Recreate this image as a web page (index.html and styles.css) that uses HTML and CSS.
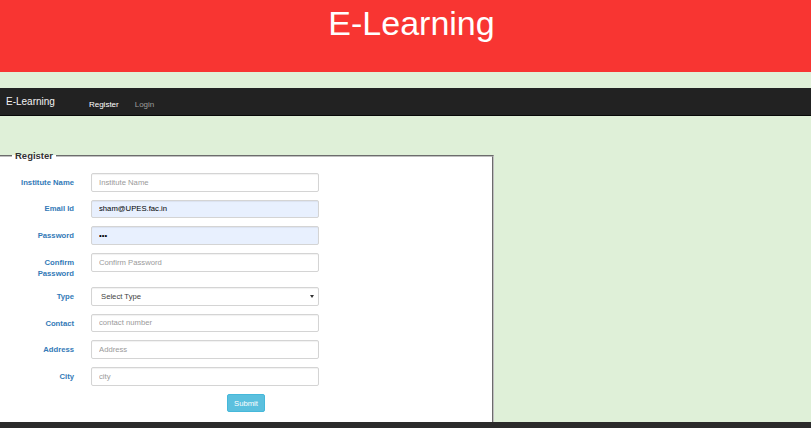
FILE: index.html
```html
<!DOCTYPE html>
<html lang="en">
<head>
<meta charset="utf-8">
<title>E-Learning</title>
<link rel="stylesheet" href="styles.css">
</head>
<body>
<header class="banner">
  <h1 class="banner-title">E-Learning</h1>
</header>
<nav class="navbar">
  <span class="brand">E-Learning</span>
  <ul class="nav-links">
    <li><a class="nav-link active" href="#">Register</a></li>
    <li><a class="nav-link" href="#">Login</a></li>
  </ul>
</nav>
<main class="main">
  <fieldset class="register">
    <legend class="register-legend">Register</legend>
    <form class="form">
      <div class="row">
        <label class="label" for="inst">Institute Name</label>
        <input class="field" id="inst" type="text" placeholder="Institute Name">
      </div>
      <div class="row">
        <label class="label" for="email">Email Id</label>
        <input class="field field-filled" id="email" type="text" value="sham@UPES.fac.in">
      </div>
      <div class="row">
        <label class="label" for="pwd">Password</label>
        <input class="field field-filled" id="pwd" type="password" value="abc">
      </div>
      <div class="row">
        <label class="label" for="cpwd">Confirm Password</label>
        <input class="field" id="cpwd" type="password" placeholder="Confirm Password">
      </div>
      <div class="row">
        <label class="label" for="type">Type</label>
        <div class="select-wrap">
          <select class="field select" id="type">
            <option>Select Type</option>
          </select>
        </div>
      </div>
      <div class="row">
        <label class="label" for="contact">Contact</label>
        <input class="field" id="contact" type="text" placeholder="contact number">
      </div>
      <div class="row">
        <label class="label" for="addr">Address</label>
        <input class="field" id="addr" type="text" placeholder="Address">
      </div>
      <div class="row">
        <label class="label" for="city">City</label>
        <input class="field" id="city" type="text" placeholder="city">
      </div>
      <div class="row row-last">
        <span></span>
        <div><button class="btn-submit" type="button">Submit</button></div>
      </div>
    </form>
  </fieldset>
</main>
<footer class="footer"></footer>
</body>
</html>
```
FILE: styles.css
```css
html, body {
  margin: 0;
  padding: 0;
}
body {
  background: #dff0d8;
  font-family: "Liberation Sans", Arial, sans-serif;
  color: #333;
  height: 428px;
  overflow: hidden;
}
.banner {
  background: #f83532;
  height: 72px;
  margin-bottom: 16px;
  text-align: center;
  padding-left: 12px;
}
.banner-title {
  margin: 0;
  padding-top: 3px;
  font-size: 34px;
  line-height: 40px;
  font-weight: normal;
  color: #fff;
}
.navbar {
  background: #222;
  height: 28px;
  display: flex;
  align-items: center;
  box-sizing: border-box;
  border-bottom: 1px solid #080808;
}
.brand {
  color: #f2f2f2;
  font-size: 10px;
  padding-left: 6px;
  line-height: 14px;
}
.nav-links {
  list-style: none;
  margin: 0 0 0 34px;
  padding: 0;
  display: flex;
  gap: 16px;
}
.nav-link {
  color: #9d9d9d;
  text-decoration: none;
  font-size: 8px;
  line-height: 12px;
}
.nav-link.active {
  color: #fff;
}
.main {
  padding-top: 33px;
}
.register {
  margin: 0 0 0 -2px;
  width: 496px;
  box-sizing: border-box;
  background: #fff;
  border: 2px groove #c0c0c0;
  border-bottom: 0;
  padding: 10px 0 10px 12px;
  min-width: 0;
}
.register-legend {
  font-size: 9.5px;
  font-weight: bold;
  line-height: 14px;
  padding: 0 3px;
  color: #333;
}
.form {
  display: flex;
  flex-direction: column;
  gap: 8.2px;
}
.row {
  display: grid;
  grid-template-columns: 62px 228px;
  column-gap: 17px;
  align-items: start;
}
.label {
  display: block;
  font-size: 7.7px;
  font-weight: bold;
  color: #337ab7;
  text-align: right;
  line-height: 11px;
  padding-top: 3.8px;
}
.field {
  display: block;
  box-sizing: border-box;
  width: 228px;
  height: 18.5px;
  margin: 0;
  padding: 0 7px;
  border: 1px solid #d4d4d4;
  border-radius: 2px;
  box-shadow: inset 0 1px 1px rgba(0,0,0,.06);
  background: #fff;
  font-family: "Liberation Sans", Arial, sans-serif;
  font-size: 7.7px;
  color: #555;
  outline: none;
}
.field::placeholder {
  color: #9a9a9a;
}
.field-filled {
  background: #e8f0fe;
  color: #000;
}
.select-wrap {
  position: relative;
  width: 228px;
}
.select {
  appearance: none;
  -webkit-appearance: none;
  padding-left: 9px;
  color: #444;
}
.select-wrap::after {
  content: "";
  position: absolute;
  right: 5px;
  top: 8px;
  border-left: 2px solid transparent;
  border-right: 2px solid transparent;
  border-top: 3px solid #333;
}
.btn-submit {
  display: block;
  margin-left: 136px;
  height: 18.5px;
  padding: 0 6px;
  background: #5bc0de;
  border: 1px solid #46b8da;
  border-radius: 2px;
  color: #fff;
  font-family: "Liberation Sans", Arial, sans-serif;
  font-size: 7.7px;
  cursor: pointer;
}
.footer {
  background: #2b2b2b;
  height: 10px;
}
```
